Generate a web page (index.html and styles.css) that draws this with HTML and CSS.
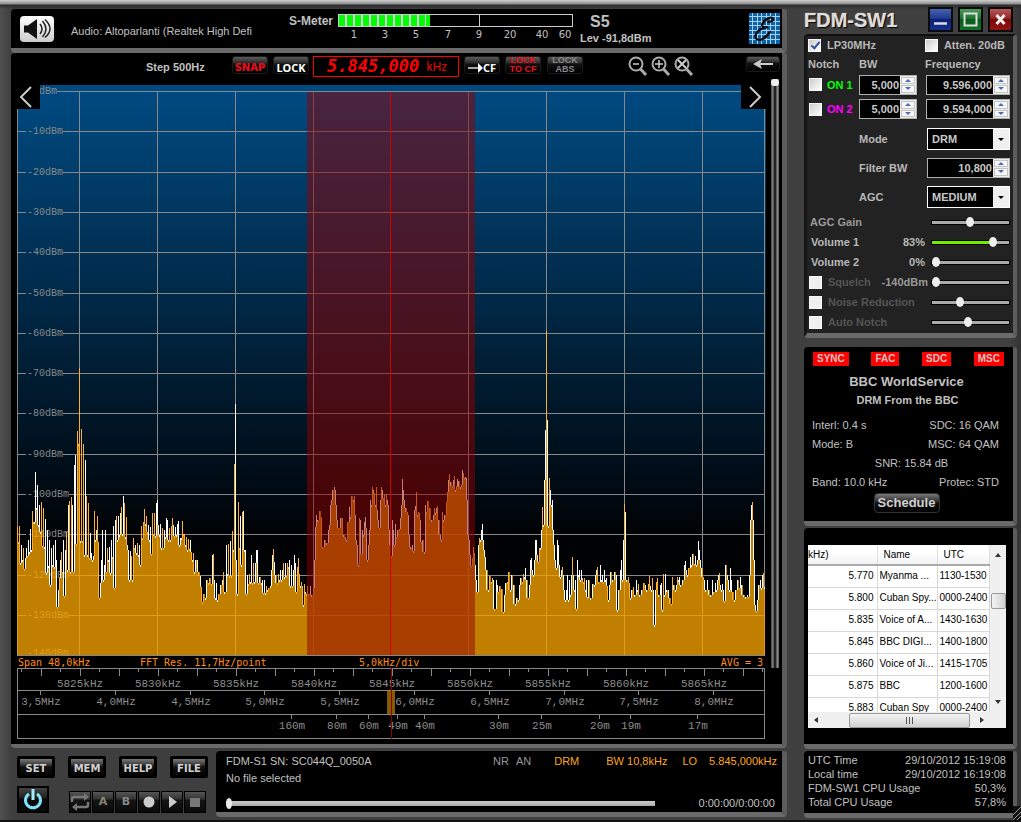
FILE: index.html
```html
<!DOCTYPE html>
<html lang="en">
<head>
<meta charset="utf-8">
<title>FDM-SW1</title>
<link rel="stylesheet" href="styles.css">
</head>
<body>
<div class="app">
  <main class="left">
    <section class="panel audio">
      <button class="speaker" aria-label="Audio output">
        <svg width="34" height="26" viewBox="0 0 34 26">
          <path d="M4 9.500h4l9-6.500v20l-9-6.500h-4z" fill="#111"/>
          <path d="M20 8q4 5 0 10M22.500 5q7 8 0 16M25 3.500q10 9.500 0 18" fill="none" stroke="#222" stroke-width="1.500"/>
        </svg>
      </button>
      <span class="audio-name">Audio: Altoparlanti (Realtek High Defi</span>
      <span class="meter-title">S-Meter</span>
      <svg class="meter" width="240" height="30" viewBox="0 0 240 30" role="img" aria-label="Signal S5">
        <rect x="1" y="1" width="91" height="12" fill="#ddd"/>
        <path d="M4 1v12M12 1v12M20 1v12M28 1v12M36 1v12M44 1v12M52 1v12M60 1v12M68 1v12M76 1v12M84 1v12" stroke="#00ff00" stroke-width="6"/>
        <rect x="88" y="1" width="4" height="12" fill="#00ff00"/>
        <rect x=".5" y=".5" width="234" height="12" fill="none" stroke="#ccc"/>
        <path d="M141.500 1v11" stroke="#ccc"/>
        <g class="meter-text">
          <text x="16" y="24">1</text><text x="47" y="24">3</text><text x="78" y="24">5</text><text x="110" y="24">7</text>
          <text x="141" y="24">9</text><text x="172" y="24">20</text><text x="204" y="24">40</text><text x="227" y="24">60</text>
        </g>
      </svg>
      <div class="level"><strong>S5</strong><span>Lev -91,8dBm</span></div>
      <svg class="logo" width="31" height="31" viewBox="0 0 31 31" role="img" aria-label="Elad">
        <rect width="31" height="31" fill="#0b62a4"/>
        <path d="M3.500 0v31M8.500 0v31M12.500 0v31M17.500 0v31M21.500 0v31M26.500 0v31M0 3.500h31M0 8.500h31M0 12.500h31M0 17.500h31M0 21.500h31M0 26.500h31" stroke="#a9cfea" stroke-width="1"/>
        <path d="M19 9q5 0 5-3q-1-3-6 0q-7 5-4 8q2 1 5 0q-9 1-12 7q-2 6 4 6q5-1 10-8" fill="none" stroke="#05080c" stroke-width="2.200" stroke-linecap="round"/>
      </svg>
    </section>

    <section class="panel scope">
      <div class="toolbar">
        <span class="step">Step 500Hz</span>
        <button class="tool snap">SNAP</button>
        <button class="tool lock">LOCK</button>
        <output class="freq"><span class="freq-num">5.845,000</span><span class="freq-unit">kHz</span></output>
        <button class="tool cf"><svg width="15" height="10" viewBox="0 0 15 10"><path d="M0 5h11" stroke="#fff" stroke-width="1.300"/><path d="M10 0l5 5-5 5z" fill="#fff"/></svg>CF</button>
        <button class="tool two red"><span>LOCK</span><span>TO CF</span></button>
        <button class="tool two dim"><span>LOCK</span><span>ABS</span></button>
        <div class="zooms">
          <button aria-label="Zoom out"><svg width="20" height="21" viewBox="0 0 20 21"><circle cx="8" cy="8" r="6.500" fill="none" stroke="#aaa" stroke-width="2"/><path d="M5 8h6" stroke="#ccc" stroke-width="1.500"/><path d="M12.500 13l5.500 6" stroke="#aaa" stroke-width="3"/></svg></button>
          <button aria-label="Zoom in"><svg width="20" height="21" viewBox="0 0 20 21"><circle cx="8" cy="8" r="6.500" fill="none" stroke="#aaa" stroke-width="2"/><path d="M4 8h8M8 4v8" stroke="#ccc" stroke-width="1.500"/><path d="M12.500 13l5.500 6" stroke="#aaa" stroke-width="3"/></svg></button>
          <button aria-label="Zoom reset"><svg width="20" height="21" viewBox="0 0 20 21"><circle cx="8" cy="8" r="6.500" fill="none" stroke="#aaa" stroke-width="2"/><path d="M4 4l8 8M12 4l-8 8" stroke="#ccc" stroke-width="2"/><path d="M12.500 13l5.500 6" stroke="#aaa" stroke-width="3"/></svg></button>
        </div>
        <button class="tool back" aria-label="Back"><svg width="22" height="10" viewBox="0 0 22 10"><path d="M6 5h15" stroke="#ccc" stroke-width="2"/><path d="M1 5l9-5-2 5 2 5z" fill="#ccc"/></svg></button>
      </div>
      <div class="display">
        <div class="plot">
          <svg class="spectrum" viewBox="16 79 751 661" role="img" aria-label="Spectrum from 5821 to 5869 kHz">
            <defs>
              <linearGradient id="sky" x1="0" y1="0" x2="0" y2="1">
                <stop offset="0" stop-color="#004b83"/><stop offset=".8" stop-color="#000204"/><stop offset="1" stop-color="#000"/>
              </linearGradient>
            </defs>
            <rect x="17" y="85" width="749" height="570" fill="url(#sky)"/>
            <g id="grid"></g>
            <g id="trace"></g>
            <rect class="passband" x="307" y="92" width="168" height="563"/>
            <path d="M390.500 92V655" stroke="#d00000"/>
            <g class="info">
              <text x="18" y="666">Span 48,0kHz</text><text x="140" y="666">FFT Res. 11,7Hz/point</text>
              <text x="359" y="666">5,0kHz/div</text><text x="763" y="666" text-anchor="end">AVG = 3</text>
            </g>
            <g id="scale"></g>
            <rect x="387" y="690" width="8" height="24" fill="#be8200" opacity=".7"/>
            <path d="M391.500 668V739" stroke="#8c0000"/>
          </svg>
          <button class="pan pan-left" aria-label="Scroll left"><svg width="14" height="22" viewBox="0 0 14 22"><path d="M12 1L2 11l10 10" fill="none" stroke="#ccc" stroke-width="2"/></svg></button>
          <button class="pan pan-right" aria-label="Scroll right"><svg width="14" height="22" viewBox="0 0 14 22"><path d="M2 1l10 10L2 21" fill="none" stroke="#ccc" stroke-width="2"/></svg></button>
        </div>
        <input class="vslider" type="range" min="0" max="100" value="100" aria-label="Reference level">
      </div>
    </section>

    <div class="bottom">
      <div class="keys">
        <div class="key-row">
          <button class="key">SET</button><button class="key">MEM</button><button class="key">HELP</button><button class="key">FILE</button>
        </div>
        <div class="key-row media">
          <button class="power" aria-label="Power"><svg width="22" height="24" viewBox="0 0 22 24"><path d="M7 6a7.500 7.500 0 1 0 8 0" fill="none" stroke="#7fe3fa" stroke-width="3"/><path d="M11 1v11" stroke="#9ff0ff" stroke-width="3"/></svg></button>
          <div class="transport">
            <button aria-label="Loop"><svg width="20" height="18" viewBox="0 0 20 18"><path d="M2 9V6q0-2 2-2h11M18 9v3q0 2-2 2H6" fill="none" stroke="#777" stroke-width="2.500"/><path d="M14 0l5 4-5 4zM7 10l-5 4 5 4z" fill="#777"/></svg></button>
            <button class="letter-a">A</button>
            <button class="letter-b">B</button>
            <button aria-label="Record"><svg width="12" height="12" viewBox="0 0 12 12"><circle cx="6" cy="6" r="5.500" fill="#ccc"/></svg></button>
            <button aria-label="Play"><svg width="12" height="12" viewBox="0 0 12 12"><path d="M3 0l8 6-8 6z" fill="#ccc"/></svg></button>
            <button aria-label="Stop"><svg width="12" height="12" viewBox="0 0 12 12"><path d="M1 2h10v9H1z" fill="#777"/></svg></button>
          </div>
        </div>
      </div>
      <section class="panel status">
        <div class="status-row"><span>FDM-S1 SN: SC044Q_0050A</span>
          <span class="flags"><span class="grey">NR</span><span class="grey an">AN</span><span class="drm">DRM</span><span class="bw">BW 10,8kHz</span><span class="lo">LO</span><span>5.845,000kHz</span></span>
        </div>
        <div class="status-row file">No file selected</div>
        <div class="status-row play"><input class="seek" type="range" min="0" max="100" value="0" aria-label="Playback position"><span>0:00:00/0:00:00</span></div>
      </section>
    </div>
  </main>

  <aside class="right">
    <header class="title">
      <h1>FDM-SW1</h1>
      <button class="win blue" aria-label="Minimize"><svg width="13" height="13" viewBox="0 0 13 13"><path d="M0 10.500h13" stroke="#ddd" stroke-width="2.500"/></svg></button>
      <button class="win green" aria-label="Maximize"><svg width="15" height="15" viewBox="0 0 15 15"><path d="M1.500 1.500h12v12h-12z" fill="none" stroke="#ddd" stroke-width="2"/></svg></button>
      <button class="win red-win" aria-label="Close"><svg width="13" height="13" viewBox="0 0 13 13"><path d="M2.500 2l8 9M10.500 2l-8 9" stroke="#eee" stroke-width="3"/></svg></button>
    </header>

    <section class="panel controls">
      <div class="row"><label class="chk"><input type="checkbox" checked>LP30MHz</label><label class="chk atten"><input type="checkbox">Atten. 20dB</label></div>
      <div class="row three"><span>Notch</span><span>BW</span><span class="freq-head">Frequency</span></div>
      <div class="row three">
        <label class="chk on1"><input type="checkbox">ON 1</label>
        <span class="spin"><input value="5,000" aria-label="Notch 1 BW"><span class="ud"><button aria-label="Up"></button><button class="down" aria-label="Down"></button></span></span>
        <span class="spin"><input value="9.596,000" aria-label="Notch 1 frequency"><span class="ud"><button aria-label="Up"></button><button class="down" aria-label="Down"></button></span></span>
      </div>
      <div class="row three">
        <label class="chk on2"><input type="checkbox">ON 2</label>
        <span class="spin"><input value="5,000" aria-label="Notch 2 BW"><span class="ud"><button aria-label="Up"></button><button class="down" aria-label="Down"></button></span></span>
        <span class="spin"><input value="9.594,000" aria-label="Notch 2 frequency"><span class="ud"><button aria-label="Up"></button><button class="down" aria-label="Down"></button></span></span>
      </div>
      <div class="row pair"><label for="mode">Mode</label><span class="drop"><select id="mode"><option>DRM</option></select></span></div>
      <div class="row pair"><label for="fbw">Filter BW</label><span class="spin"><input id="fbw" value="10,800"><span class="ud"><button aria-label="Up"></button><button class="down" aria-label="Down"></button></span></span></div>
      <div class="row pair"><label for="agc">AGC</label><span class="drop"><select id="agc"><option>MEDIUM</option></select></span></div>
      <div class="row slide soft"><label for="gain">AGC Gain</label><span></span><input id="gain" class="hs" type="range" value="49"></div>
      <div class="row slide"><label for="v1">Volume 1</label><span>83%</span><input id="v1" class="hs lit" type="range" value="83"></div>
      <div class="row slide"><label for="v2">Volume 2</label><span>0%</span><input id="v2" class="hs" type="range" value="0"></div>
      <div class="row slide off"><label class="chk"><input type="checkbox">Squelch</label><span class="sq">-140dBm</span><input class="hs" type="range" value="0" aria-label="Squelch"></div>
      <div class="row slide off"><label class="chk"><input type="checkbox">Noise Reduction</label><span></span><input class="hs" type="range" value="35" aria-label="Noise Reduction"></div>
      <div class="row slide off"><label class="chk"><input type="checkbox">Auto Notch</label><span></span><input class="hs" type="range" value="47" aria-label="Auto Notch"></div>
    </section>

    <section class="panel drm-info">
      <div class="badges"><span>SYNC</span><span>FAC</span><span>SDC</span><span>MSC</span></div>
      <h2>BBC WorldService</h2>
      <h3>DRM From the BBC</h3>
      <div class="facts"><span>Interl: 0.4 s</span><span>SDC: 16 QAM</span></div>
      <div class="facts"><span>Mode: B</span><span>MSC: 64 QAM</span></div>
      <div class="facts mid"><span>SNR: 15.84 dB</span></div>
      <div class="facts"><span>Band: 10.0 kHz</span><span>Protec: STD</span></div>
      <button class="schedule">Schedule</button>
    </section>

    <section class="panel stations">
      <div class="list">
        <div class="view">
          <table>
            <thead><tr><th class="c1">kHz)</th><th class="c2">Name</th><th>UTC</th></tr></thead>
            <tbody>
              <tr><td>5.770</td><td>Myanma ...</td><td>1130-1530</td></tr>
              <tr><td>5.800</td><td>Cuban Spy...</td><td>0000-2400</td></tr>
              <tr><td>5.835</td><td>Voice of A...</td><td>1430-1630</td></tr>
              <tr><td>5.845</td><td>BBC DIGI...</td><td>1400-1800</td></tr>
              <tr><td>5.860</td><td>Voice of Ji...</td><td>1415-1705</td></tr>
              <tr><td>5.875</td><td>BBC</td><td>1200-1600</td></tr>
              <tr><td>5.883</td><td>Cuban Spy</td><td>0000-2400</td></tr>
            </tbody>
          </table>
        </div>
        <div class="vbar"><i class="tri up"></i><i class="vthumb"></i><i class="tri dn"></i></div>
        <div class="hbar"><i class="tri lf"></i><i class="hthumb"></i><i class="tri rt"></i></div>
      </div>
    </section>

    <section class="panel system">
      <div><span>UTC Time</span><span>29/10/2012 15:19:08</span></div>
      <div><span>Local time</span><span>29/10/2012 16:19:08</span></div>
      <div><span>FDM-SW1 CPU Usage</span><span>50,3%</span></div>
      <div><span>Total CPU Usage</span><span>57,8%</span></div>
    </section>
  </aside>
  <svg class="grip" width="8" height="14" viewBox="0 0 8 14"><rect width="8" height="14" fill="#111"/><path d="M0 9l8-8M0 14l8-8M4 14l4-4" stroke="#999"/></svg>
</div>
<script src="spectrum.js"></script>
</body>
</html>
```
FILE: styles.css
```css
* { box-sizing: border-box; }
body {
  margin: 0;
  background: #000;
  color: #c0c0c0;
  font: 11px/14px "Liberation Sans", Arial, sans-serif;
}
h1, h2, h3 { margin: 0; }
button, input, select { font: inherit; color: inherit; margin: 0; padding: 0; }
button { background: none; border: 0; display: flex; align-items: center; justify-content: center; }
svg { display: block; }

.app {
  position: relative;
  display: grid;
  grid-template-columns: minmax(0, 1fr) 213px;
  gap: 17px;
  min-height: 100vh;
  padding: 0 4px 0 11px;
  background:
    linear-gradient(#d0d0d0, #8c8c8c 4px, #2c2c2c 5px, transparent 9px),
    linear-gradient(90deg, #505050, #3e3e3e 12px, #404040 calc(100% - 12px), #333);
  border-bottom: 2px solid #111;
}
.panel {
  background: #000;
  border-right: 5px solid #5c5c5c;
  border-bottom: 5px solid #6a6a6a;
  border-radius: 4px 3px 4px 4px;
}

/* left side */
.left { padding-top: 9px; min-width: 0; }
.audio { display: flex; align-items: center; height: 44px; padding: 0 2px 0 9px; }
.speaker { width: 34px; height: 26px; border-radius: 4px; background: linear-gradient(#fff, #ccc); }
.audio-name { flex: 1; margin-left: 17px; padding-top: 4px; white-space: nowrap; overflow: hidden; }
.meter-title { font-size: 12px; font-weight: bold; margin-right: 5px; align-self: flex-start; padding-top: 5px; }
.meter { align-self: flex-start; margin-top: 5px; }
.meter-text { font: 10px "DejaVu Sans", sans-serif; fill: #c0c0c0; text-anchor: middle; }
.level { width: 171px; padding-left: 2px; font-weight: bold; display: flex; flex-direction: column; }
.level strong { font-size: 16px; line-height: 18px; padding-left: 10px; }

.scope { padding: 1px 0 4px 5px; border-bottom-width: 4px; }
.toolbar { display: flex; align-items: flex-start; height: 25px; padding: 2px 2px 0 130px; }
.step { font-weight: bold; width: 86px; padding-top: 4px; }
.tool {
  flex: none;
  width: 36px;
  height: 18px;
  margin-right: 5px;
  border: 1px solid #1a1a1a;
  border-radius: 3px;
  background: linear-gradient(#5a5a5a, #2e2e2e 35%, #111 45%, #000);
  font: bold 11px/12px "Noto Sans", sans-serif;
}
.snap { color: #f00c18; font: bold 10px/20px "DejaVu Sans", sans-serif; padding-top: 6px; }
.lock { color: #fff; padding-top: 6px; margin-right: 4px; }
.freq {
  width: 146px;
  height: 21px;
  margin-right: 5px;
  border: 1px solid #f00;
  color: #f00;
  display: flex;
  align-items: center;
  justify-content: space-between;
  padding: 0 11px 0 13px;
}
.freq-num { font: italic bold 17px/19px "DejaVu Sans Mono", monospace; }
.freq-unit { font: 12px/16px "Open Sans", sans-serif; }
.cf { color: #fff; padding-top: 6px; }
.two { flex-direction: column; font: bold 9px/9px "Liberation Sans", Arial, sans-serif; }
.two span { display: block; height: 9px; }
.red { color: #f00c18; }
.dim { color: #888; }
.two.red { margin-right: 6px; }
.zooms { display: flex; gap: 3px; margin-left: 40px; }
.back { margin: 0 0 0 auto; height: 16px; width: 34px; }

.display { display: flex; align-items: stretch; }
.plot { position: relative; flex: 1; min-width: 0; }
.spectrum { width: 100%; height: auto; }
.pan { position: absolute; top: 6px; width: 24px; height: 24px; background: #000; }
.pan-left { left: 0; padding-right: 4px; }
.pan-right { right: 1px; width: 25px; padding-left: 3px; }
.axis { font: 10px "Liberation Mono", monospace; fill: #888; }
.ruler { font: 11px "Liberation Mono", monospace; fill: #8c8c8c; text-anchor: middle; }
.info { font: 10px "DejaVu Sans Mono", monospace; fill: #ff8c14; }
.lines { stroke: #888; fill: none; shape-rendering: crispEdges; }
.area { fill: #f7a300; fill-opacity: .78; }
.edge-a, .edge-b { fill: none; stroke: #ffb030; shape-rendering: crispEdges; }
.edge-b { stroke: #fff; }
.passband { fill: #900000; fill-opacity: .5; }
.vslider {
  appearance: none;
  writing-mode: vertical-lr;
  direction: rtl;
  width: 8px;
  min-height: 0;
  margin: 0 3px 72px 4px;
  background: linear-gradient(90deg, #555 1px, #999 2px, #222 3px, #222 5px, #999 6px, #555);
}
.vslider::-webkit-slider-thumb { appearance: none; width: 8px; height: 7px; border-radius: 3px; background: #eee; }

.bottom { display: grid; grid-template-columns: 205px minmax(0, 1fr); margin-top: 3px; }
.keys { padding: 5px 0 0 6px; display: flex; flex-direction: column; gap: 8px; }
.key-row { display: flex; gap: 13px; }
.key {
  width: 38px;
  height: 22px;
  border: 3px solid #000;
  border-radius: 2px;
  background: linear-gradient(#777, #444 30%, #111 50%, #050505);
  color: #d0d0d0;
  font: bold 10px/12px "DejaVu Sans", sans-serif;
  padding-top: 3px;
}
.media { gap: 20px; align-items: flex-start; }
.power { width: 32px; height: 27px; border: 2px solid #000; background: linear-gradient(#444, #222 40%, #0a0a0a 50%); }
.transport { display: flex; gap: 1px; padding-top: 5px; }
.transport button {
  width: 22px;
  height: 22px;
  border: 1px solid #000;
  background: linear-gradient(#555, #333 35%, #151515 40%, #0a0a0a);
  color: #888;
  font: bold 11px/12px "DejaVu Sans", sans-serif;
}
.transport .letter-a { color: #8a8672; }
.status { padding: 1px 5px 0 10px; height: 66px; }
.status-row { display: flex; justify-content: space-between; align-items: center; height: 17px; }
.flags { display: flex; color: #ffa51e; }
.grey { color: #999; }
.an { margin: 0 23px 0 7px; }
.drm { margin-right: 27px; }
.bw { margin-right: 15px; }
.lo { margin-right: 12px; }
.play { padding-top: 8px; height: 26px; padding-right: 2px; }
.seek { appearance: none; background: none; width: 429px; height: 12px; }
.seek::-webkit-slider-runnable-track { height: 5px; background: linear-gradient(#ccc, #aaa); }
.seek::-webkit-slider-thumb { appearance: none; width: 6px; height: 11px; margin-top: -3px; border-radius: 50%; background: #e8e8e8; }

/* right side */
.right { padding-top: 5px; display: flex; flex-direction: column; }
.right .panel { border-right-width: 4px; }
.title { display: flex; gap: 5px; align-items: center; height: 29px; padding-right: 4px; }
.title h1 {
  flex: 1;
  font-size: 20px;
  line-height: 24px;
  color: #ddd;
  text-shadow: 1px 1px 1px #000, 0 0 1px #fff;
}
.win { width: 25px; height: 25px; border: 2px solid #0a0a0a; }
.blue { background: linear-gradient(#4a62b0, #20398e 45%, #0b1f78 50%, #16308c); }
.green { background: linear-gradient(#4f9a5c, #1f7430 45%, #0b5c1c 50%, #137028); }
.red-win { background: linear-gradient(#b85858, #962424 45%, #7c0808 50%, #941414); }

.controls {
  background: #222;
  border-left: 3px solid #161616;
  border-top: 2px solid #101010;
  display: grid;
  grid-template-rows: 18px 20px 21px 28px 31px 27px 31px repeat(6, 20px);
  font-weight: bold;
  color: #b8b8b8;
  padding-bottom: 1px;
}
.row { display: flex; align-items: center; }
.chk { display: flex; align-items: center; gap: 6px; white-space: nowrap; }
.chk input {
  appearance: none;
  width: 13px;
  height: 13px;
  margin-left: 1px;
  border: 1px solid #f8f8f8;
  background: linear-gradient(135deg, #ccc, #fff);
}
.chk input:checked { position: relative; }
.chk input:checked::after {
  content: "";
  position: absolute;
  left: 4px;
  top: 0;
  width: 3px;
  height: 7px;
  border: solid #33519a;
  border-width: 0 2px 2px 0;
  transform: rotate(40deg);
}
.atten { margin-left: auto; padding-right: 8px; }
.three { display: grid; grid-template-columns: 52px 58px 84px; }
.three > :nth-child(3) { margin-left: 9px; width: 84px; }
.three > .freq-head { margin-left: 8px; }
.three > :first-child { padding-left: 1px; }
.on1, .on2 { gap: 5px; }
.on1 { color: #00ff00; }
.on2 { color: #ff00ff; }
.spin { display: flex; height: 20px; border: 1px solid #b0b0b0; background: #000; }
.spin input { flex: 1; min-width: 0; width: 0; background: none; border: 0; text-align: right; padding-right: 1px; font-weight: bold; color: #c8c8c8; }
.ud { display: flex; flex-direction: column; width: 16px; background: #ececec; padding: 1px; gap: 1px; }
.ud button { flex: 1; background: #f6f6f6; border: 1px solid #c4c4c4; }
.ud button::after { content: ""; border: solid transparent; border-width: 0 3px 3px; border-bottom-color: #4d6cb8; }
.ud .down::after { border-width: 3px 3px 0; border-top-color: #4d6cb8; }
.pair { padding-left: 52px; }
.pair label { width: 68px; }
.pair .spin, .drop { width: 83px; }
.drop { position: relative; height: 22px; border: 1px solid #fff; background: #000; display: flex; }
.drop select { appearance: none; border: 0; background: #000; flex: 1; padding-left: 4px; font-weight: bold; color: #c8c8c8; }
.drop::before, .drop::after { content: ""; position: absolute; pointer-events: none; }
.drop::before { right: 0; top: 0; bottom: 0; width: 16px; background: #f0f0f0; }
.drop::after { right: 5px; top: 9px; border: solid transparent; border-width: 3px 3px 0; border-top-color: #000; }
.slide { padding-left: 3px; }
.slide label { flex: 1; white-space: nowrap; padding-left: 1px; }
.slide > span { text-align: right; margin-right: 6px; }
.slide .hs { margin-right: 3px; }
.soft label { padding-left: 0; color: #9a9a9a; }
.off { padding-left: 0; }
.off label { color: #555; }
.off .chk input { background: #f0f0f0; }
.off > .sq { color: #999; margin-right: 3px; }
.hs { appearance: none; background: none; width: 79px; height: 12px; }
.hs::-webkit-slider-runnable-track { height: 5px; border: 1px solid #000; background: #aaa; }
.lit::-webkit-slider-runnable-track { background: linear-gradient(90deg, #6fee00 78%, #aaa 0); }
.hs::-webkit-slider-thumb { appearance: none; width: 8px; height: 10px; margin-top: -4px; border-radius: 50%; background: #eee; }

.drm-info { margin-top: 9px; height: 179px; padding: 5px 12px 0 8px; }
.badges { display: flex; justify-content: space-between; padding-left: 1px; margin-right: -3px; }
.badges span { background: #f00; color: #d8c0c0; font-size: 10px; font-weight: bold; line-height: 14px; padding: 0 4px; }
.drm-info h2 { font-size: 13px; line-height: 18px; text-align: center; margin-top: 7px; }
.drm-info h3 { font-size: 11px; line-height: 18px; text-align: center; padding-left: 2px; }
.facts { display: flex; justify-content: space-between; line-height: 19px; padding-right: 2px; }
.drm-info h3 + .facts { margin-top: 7px; }
.facts.mid { justify-content: center; padding-left: 12px; }
.schedule {
  width: 66px;
  height: 20px;
  margin: 1px auto 0;
  border-radius: 4px;
  border: 1px solid #333;
  background: linear-gradient(#777, #333 40%, #111 50%, #000);
  font-size: 13px;
  font-weight: bold;
  color: #d0d0d0;
}

.stations { margin-top: 2px; height: 221px; padding: 17px 7px 0 4px; }
.list {
  display: grid;
  grid-template: 167px 16px / minmax(0, 1fr) 16px;
  background: #f0f0f0;
  color: #000;
}
.view { background: #fff; overflow: hidden; }
table { border-collapse: collapse; table-layout: fixed; width: 100%; font-size: 10px; }
th { font-weight: normal; height: 20px; padding: 0 0 0 6px; text-align: left; border-bottom: 2px solid #aaa; border-right: 1px solid #e0e0e0; background: linear-gradient(#fff 40%, #f1f2f4); }
.c1 { width: 69px; padding-left: 0; }
.c2 { width: 60px; }
td { height: 22px; padding: 0 0 0 2px; white-space: nowrap; border-bottom: 1px solid #d8d8d8; border-right: 1px solid #d8d8d8; }
td:first-child { text-align: right; padding-right: 3px; }
.vbar { display: flex; flex-direction: column; align-items: center; padding: 8px 0; }
.vthumb { width: 15px; height: 16px; margin: 36px 0 auto; border: 1px solid #999; border-radius: 2px; background: linear-gradient(90deg, #f4f4f4, #d0d0d0); }
.hbar { display: flex; align-items: center; padding: 0 6px; }
.hthumb {
  width: 121px;
  height: 15px;
  margin: 0 auto 0 31px;
  border: 1px solid #999;
  border-radius: 2px;
  background:
    linear-gradient(90deg, #555 1px, transparent 1px 3px, #555 3px 4px, transparent 4px 6px, #555 6px) center / 7px 7px no-repeat,
    linear-gradient(#f4f4f4, #d0d0d0);
}
.tri { border: 3px solid transparent; width: 0; height: 0; }
.up { border-bottom: 4px solid #333; border-top: 0; }
.dn { border-top: 4px solid #333; border-bottom: 0; }
.lf { border-right: 4px solid #333; border-left: 0; }
.rt { border-left: 4px solid #333; border-right: 0; }

.system { margin-top: 2px; height: 67px; padding: 2px 7px 0 4px; }
.system div { display: flex; justify-content: space-between; }
.grip { position: absolute; right: 0; bottom: 0; }
```
FILE: spectrum.js
```js
// Level trace: x, y pairs in plot coordinates.
const trace = `17,527 18,542 19,526 20,563 21,545 22,560 23,548 24,569 25,558 26,548 27,556 28,540 29,552 30,529 31,550 32,511 33,522 34,522 35,472 36,508 37,485 38,525 39,505 40,532 41,502 42,546 43,508 44,547 45,519 46,573 47,530 48,566 49,540 50,585 51,548 52,565 53,545 54,567 55,540 56,560 57,607 58,590 59,578 60,560 61,552 62,572 63,540 64,596 65,550 66,532 67,570 68,505 69,501 70,572 71,497 72,505 73,572 74,465 75,455 76,544 77,431 78,444 79,368 80,541 81,429 82,541 83,444 84,555 85,460 86,496 87,555 88,503 89,558 90,533 91,553 92,560 93,556 94,511 95,540 96,530 97,516 98,542 99,598 100,583 101,560 102,530 103,580 104,565 105,530 106,572 107,548 108,560 109,547 110,573 111,540 112,557 113,526 114,588 115,520 116,516 117,540 118,516 119,535 120,513 121,507 122,534 123,496 124,503 125,537 126,517 127,545 128,550 129,580 130,551 131,556 132,580 133,538 134,548 135,545 136,553 137,543 138,555 139,545 140,565 141,526 142,538 143,522 144,509 145,524 146,516 147,532 148,525 149,540 150,527 151,554 152,513 153,534 154,513 155,536 156,503 157,500 158,525 159,535 160,524 161,548 162,528 163,548 164,530 165,537 166,518 167,520 168,540 169,528 170,540 171,526 172,518 173,525 174,536 175,527 176,535 177,524 178,521 179,545 180,538 181,538 182,521 183,534 184,534 185,545 186,537 187,550 188,539 189,549 190,540 191,552 192,560 193,553 194,572 195,560 197,560 198,572 200,576 201,587 202,602 203,594 205,598 206,580 208,583 209,578 211,584 212,555 213,554 214,580 215,598 216,583 217,600 218,594 220,585 222,580 223,572 224,592 226,545 227,574 228,544 229,576 230,541 231,576 232,531 233,550 234,464 235,404 236,560 237,594 238,502 239,548 240,516 241,565 242,512 243,511 244,550 245,550 246,594 247,575 248,584 249,574 250,582 251,555 252,583 253,563 254,582 255,563 256,550 257,550 258,583 259,577 261,583 262,580 263,593 264,580 265,593 266,586 267,590 268,588 270,586 271,570 272,555 273,549 274,562 275,575 277,583 278,574 279,580 280,570 281,580 282,570 283,563 284,577 285,563 286,576 287,563 288,567 289,560 290,586 291,565 292,586 293,570 294,555 295,563 296,592 297,567 298,558 299,574 300,586 301,582 302,586 303,605 304,584 305,592 306,594 307,586
308,594 310,586 311,595 313,588 314,560 315,527 316,515 317,520 319,511 321,517 322,547 324,540 326,543 328,530 329,525 330,505 331,500 332,490 334,487 335,490 336,505 337,520 338,528 340,518 342,518 343,535 345,537 346,540 347,522 349,507 350,517 351,496 353,500 354,496 355,515 356,540 357,545 358,565 359,518 360,520 361,554 362,530 363,535 364,522 365,517 366,528 367,560 368,545 369,530 370,500 371,505 372,487 373,490 374,493 375,505 376,487 377,510 378,520 379,528 380,500 381,487 382,490 383,498 384,494 385,505 386,494 387,500 388,505 389,530 390,545 391,556 392,520 393,530 394,545 395,524 396,537 397,530 399,529 400,518 401,505 402,479 403,490 404,500 405,508 407,512 408,515 409,535 410,547 412,545 413,551 414,510 415,506 416,492 417,515 418,512 419,513 420,520 421,542 422,540 424,552 425,505 426,512 427,501 429,508 431,520 433,515 434,508 435,513 436,508 437,506 438,520 440,535 441,540 442,512 443,520 444,515 446,502 447,492 448,480 449,474 450,482 452,486 453,480 454,476 455,490 456,486 457,479 458,481 460,487 461,485 462,470 463,473 464,478 465,477 466,478 467,500 468,535 469,540 470,555 471,566 472,558 473,547 474,553 475,565
476,580 477,592 478,545 479,538 480,540 481,530 482,524 483,540 484,550 485,557 486,570 488,590 489,576 491,582 492,578 493,580 494,609 496,580 497,585 498,592 499,586 501,589 503,612 504,595 505,583 507,582 508,572 510,590 511,575 513,585 515,604 516,598 518,600 519,585 520,578 522,582 523,574 524,577 525,568 526,580 528,598 529,585 530,560 531,558 532,570 533,575 534,560 535,540 536,540 537,555 538,562 539,548 540,548 541,530 542,507 543,525 544,480 545,430 546,331 547,420 548,526 549,478 550,490 551,505 552,500 553,530 554,545 555,560 556,568 557,540 558,545 559,565 560,577 561,570 562,567 563,575 564,590 565,600 566,590 567,575 568,600 569,580 570,595 571,575 572,557 573,575 574,590 575,580 576,609 577,560 578,575 579,570 580,580 581,570 582,578 583,582 584,578 585,590 586,580 587,597 588,580 590,598 592,584 594,585 595,575 596,570 597,567 598,582 600,565 601,580 602,575 603,582 604,570 605,580 606,578 607,586 608,600 609,585 610,572 612,580 614,572 616,575 617,610 618,590 620,570 621,560 622,580 623,540 624,504 625,512 626,580 628,577 629,583 630,598 631,590 633,587 634,595 636,580 637,590 638,584 639,595 641,590 643,583 645,585 646,590 648,584 649,576 650,586 651,590 652,578 653,590 654,625 655,590 656,582 657,578 658,595 660,585 661,583 662,610 663,574 664,595 665,574 666,590 668,590 669,598 671,604 672,577 673,585 675,590 676,585 677,577 678,580 679,577 680,585 682,580 684,565 685,561 686,570 687,575 688,568 690,557 691,565 692,554 694,564 695,556 696,565 697,560 698,541 699,550 700,560 701,568 703,577 704,580 705,590 707,580 708,590 710,595 712,580 713,592 715,583 716,590 717,580 718,575 719,573 720,585 721,590 722,584 723,590 724,601 725,565 727,575 728,580 729,590 730,568 731,580 732,592 734,600 735,590 737,580 739,588 740,577 741,585 743,595 745,597 747,595 748,597 749,575 750,520 751,505 752,502 753,520 754,560 755,605 756,611 757,600 758,585 760,580 761,588 762,575 763,573 764,587`
  .split(/\s+/).map(p => p.split(",").map(Number));

const path = (cls, d) => `<path class="${cls}" d="${d}"/>`;
const text = (cls, x, y, s) => `<text class="${cls}" x="${x}" y="${y}">${s}</text>`;

// Grid: one vertical line each 5 kHz, one horizontal line each 10 dB.
let grid = "";
let lines = "M17.5 91V655M764.5 91V655M17 655.5H765";
for (const x of [79, 157, 235, 313, 468, 546, 624, 702]) lines += `M${x}.5 91V655`;
for (let i = 0; i < 14; i++) {
  const y = Math.round(91 + i * 40.3);
  const label = i ? `-${i * 10}dBm` : "0dBm";
  const resume = i === 0 ? 57 : i < 10 ? 63 : 69;
  lines += `M17 ${y}.5H26M${resume} ${y}.5H765`;
  grid += text("axis", i ? 27 : 33, y + 3, label);
}
grid += text("axis", 27, 656, "-140dBm");
document.getElementById("grid").innerHTML = path("lines", lines) + grid;

// Filled trace; each peak column carries its steep edge in one of two tones.
let area = "M17 655";
let edgeA = "";
let edgeB = "";
trace.forEach(([x, y], i) => {
  const prev = trace[i - 1] || [x, y];
  const next = trace[i + 1] || [765, y];
  area += `V${y}H${next[0]}`;
  const foot = Math.max(prev[1], next[1], y + 2);
  const d = `M${x}.5 ${y}V${foot}`;
  const mix = (x * y) % 5;
  if (mix === 0 || mix === 3) edgeB += d; else edgeA += d;
});
document.getElementById("trace").innerHTML =
  path("area", area + "V655Z") + path("edge-a", edgeA) + path("edge-b", edgeB);

// Rulers below the plot: span, tuning range and broadcast bands.
let scale = "";
let marks = "M17 668.5H765M17 690.5H765M17 714.5H765M17 738.5H765M17.5 668V739M764.5 668V739";
for (let i = 0; i < 39; i++) {
  marks += `M${Math.round(21 + i * 19.5)}.5 668v${i % 2 ? 8 : 4}`;
}
for (let i = 0; i < 9; i++) scale += text("ruler", 80 + i * 78, 687, `${5825 + i * 5}kHz`);
for (let i = 0; i < 10; i++) {
  const x = Math.round(40 + i * 74.8);
  marks += `M${x}.5 690v5`;
  scale += text("ruler", x + 1, 705, (3.5 + i / 2).toFixed(1).replace(".", ",") + "MHz");
}
const bands = { 160: 291, 80: 336, 60: 368, 49: 397, 40: 424, 30: 498, 25: 541, 20: 599, 19: 630, 17: 697 };
for (const [m, x] of Object.entries(bands)) {
  marks += `M${x}.5 714v5`;
  scale += text("ruler", x + 1, 729, m + "m");
}
document.getElementById("scale").innerHTML = path("lines", marks) + scale;
```
